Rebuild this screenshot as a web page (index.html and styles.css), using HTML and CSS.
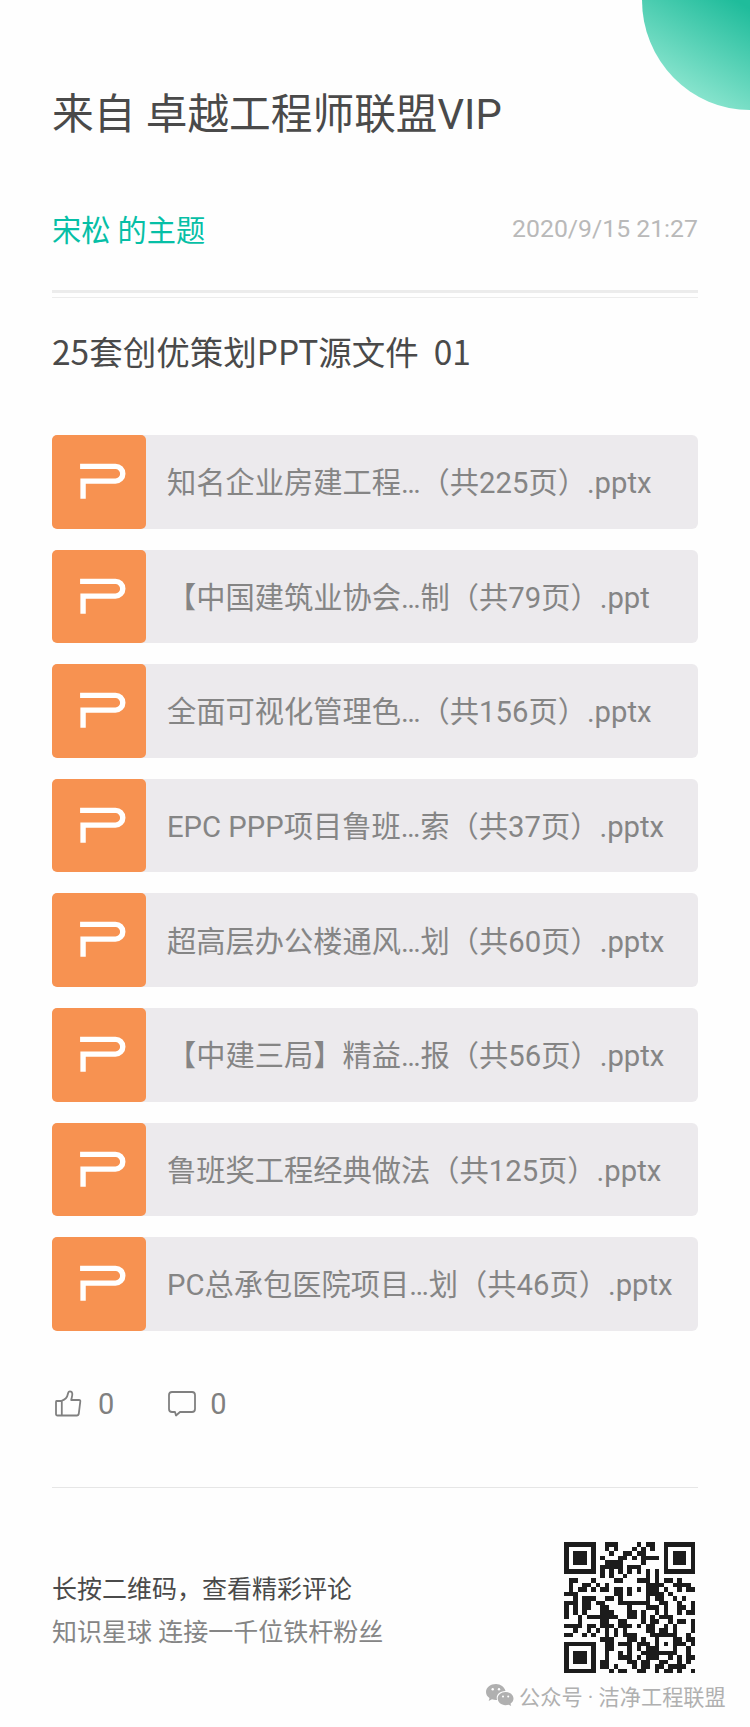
FILE: index.html
```html
<!DOCTYPE html>
<html lang="zh-CN">
<head>
    <meta charset="UTF-8">
    <meta name="viewport" content="width=device-width, initial-scale=1.0">
    <title>卓越工程师联盟VIP</title>
    <link rel="stylesheet" href="styles.css">
</head>
<body>
    <svg class="hidden">
        <symbol id="icon-ppt" viewBox="0 0 94 94">
            <path d="M28 31.500H63.500a7.300 7.300 0 0 1 0 14.800H31V64" fill="none" stroke="#fff" stroke-width="5.400" />
        </symbol>
    </svg>

    <div class="corner"></div>

    <div class="card">
        <h1>来自 卓越工程师联盟VIP</h1>

        <div class="meta">
            <span class="author">宋松 的主题</span>
            <span class="date">2020/9/15 21:27</span>
        </div>

        <h2>25套创优策划PPT源文件&nbsp; 01</h2>

        <ul class="files">
            <li><svg class="file-icon"><use href="#icon-ppt" /></svg><span>知名企业房建工程…（共225页）.pptx</span></li>
            <li><svg class="file-icon"><use href="#icon-ppt" /></svg><span>【中国建筑业协会…制（共79页）.ppt</span></li>
            <li><svg class="file-icon"><use href="#icon-ppt" /></svg><span>全面可视化管理色…（共156页）.pptx</span></li>
            <li><svg class="file-icon"><use href="#icon-ppt" /></svg><span>EPC PPP项目鲁班…索（共37页）.pptx</span></li>
            <li><svg class="file-icon"><use href="#icon-ppt" /></svg><span>超高层办公楼通风…划（共60页）.pptx</span></li>
            <li><svg class="file-icon"><use href="#icon-ppt" /></svg><span>【中建三局】精益…报（共56页）.pptx</span></li>
            <li><svg class="file-icon"><use href="#icon-ppt" /></svg><span>鲁班奖工程经典做法（共125页）.pptx</span></li>
            <li><svg class="file-icon"><use href="#icon-ppt" /></svg><span>PC总承包医院项目…划（共46页）.pptx</span></li>
        </ul>

        <div class="stats">
            <svg class="like" viewBox="0 0 28 28">
                <path d="M2.500 11H7q6-1.500 7-7.500q.5-2.500 2.500-2q2.800.6 1.300 6l-.6 2.500H25q1.500 0 1.300 1.500L24.800 23.500q-.3 2-2 2H3.500q-1.500 0-1.500-1.500V12q0-1 .5-1zM7.800 11V25.500" />
            </svg>
            <span class="count">0</span>
            <svg class="comment" viewBox="0 0 28 28">
                <path d="M4 2H24q3 0 3 3V19q0 3-3 3H12L8 25.500L7 22H4q-3 0-3-3V5q0-3 3-3z" />
            </svg>
            <span class="count">0</span>
        </div>

        <div class="footer">
            <div>
                <p class="tip">长按二维码，查看精彩评论</p>
                <p class="slogan">知识星球 连接一千位铁杆粉丝</p>
            </div>
            <svg id="qrcode" class="qrcode" viewBox="0 0 29 29"></svg>
        </div>
    </div>

    <div class="watermark">
        <svg viewBox="0 0 28 23">
            <path fill="#b0b0b0" d="M10 0C4.500 0 0 3.500 0 8c0 2.500 1.300 4.600 3.500 6L2.700 17l3.300-1.700c1.300.4 2.600.6 4 .6h1C9.500 10.500 14 6.800 19.500 6.900C18.500 2.900 14.600 0 10 0z" />
            <path fill="#b0b0b0" d="M19.500 8C15 8 11.700 11 11.700 14.600c0 3.700 3.500 6.600 7.800 6.600 1.100 0 2.100-.2 3.100-.5l2.600 1.400-.7-2.400c1.900-1.200 3-3 3-5.100C27.500 11 24 8 19.500 8z" />
            <g fill="#fff">
                <circle cx="6.700" cy="5.300" r="1.200" />
                <circle cx="13" cy="5.300" r="1.200" />
                <circle cx="17" cy="12.500" r="1" />
                <circle cx="22.200" cy="12.500" r="1" />
            </g>
        </svg>
        <span>公众号 · 洁净工程联盟</span>
    </div>

    <script>
        const rows = [
            '#######..###....#.##..#######',
            '#.....#..#.#...#.#.#..#.....#',
            '#.###.#...#..##.##....#.###.#',
            '#.###.#.#...##.#.####.#.###.#',
            '#.###.#..####....#....#.###.#',
            '#.....#.#####.###.....#.....#',
            '#######.#.#.#.#.#.#.#.#######',
            '........#.#..#....#.#........',
            '.##...#....##...###.#.##.#...',
            '.#..##.#.#........####..####.',
            '.#.##.#.##.##.#.#.###.#..#.##',
            '###........##.#...####.#.....',
            '..#.###..##.#.....#.##..#.#..',
            '###.##.##...#######..##..#..#',
            '#.#.##..##....#...###.#..##.#',
            '#.#.#...###...##.#..#.#..#.##',
            '#..#.#######..##.#.#.###.....',
            '...#....##..##...#.##..#.##.#',
            '####.##.###.###.#.##..#.#...#',
            '..#..#.#.#.#.#....##.##.#...#',
            '##..#.#..#.#.###...######..#.',
            '........###...##.#..#...##.##',
            '#######..##.###.###.#.#.###.#',
            '#.....#..##...#.#.###...#..#.',
            '#.###.#..#..#.#..########..#.',
            '#.###.#..#..###.#.###..#.#.##',
            '#.###.#.##....##.##..##..#.#.',
            '#.....#.##.#...#.##.##.####..',
            '#######...#.##..##..#.##.#..#'
        ];

        // 逐行绘制二维码
        let d = '';
        rows.forEach((row, y) => {
            for (let x = 0; x < row.length; x++) {
                if (row[x] === '#') d += `M${x} ${y}h1v1h-1z`;
            }
        });
        document.getElementById('qrcode').innerHTML = `<path d="${d}" />`;
    </script>
</body>
</html>
```
FILE: styles.css
```css
* {
    box-sizing: border-box;
    margin: 0;
    padding: 0;
}

body {
    position: relative;
    min-height: 1727px;
    background-color: #fefefe;
    font-family: Roboto, "Noto Sans CJK SC", sans-serif;
    overflow-x: hidden;
}

.hidden {
    display: none;
}

.corner {
    position: absolute;
    top: 0;
    right: 0;
    width: 108px;
    height: 110px;
    border-bottom-left-radius: 108px 110px;
    background: linear-gradient(30deg, #98ead5 15%, #1fbc9b 95%);
}

.card {
    padding: 85px 52px 0;
}

h1 {
    height: 60px;
    line-height: 60px;
    font-size: 41.700px;
    font-weight: 400;
    color: #4a4a4a;
}

.meta {
    display: flex;
    align-items: center;
    justify-content: space-between;
    height: 153px;
    padding-top: 14px;
    border-bottom: 1px solid #ececec;
    background: linear-gradient(#ececec, #ececec) 0 145px / 100% 3px no-repeat;
}

.author {
    font-size: 29.200px;
    color: #06bfa6;
}

.date {
    font-size: 24.800px;
    color: #b9b9b9;
}

h2 {
    height: 50px;
    margin-top: 28px;
    line-height: 50px;
    font-family: "Noto Sans CJK SC", sans-serif;
    font-size: 33.500px;
    font-weight: 400;
    color: #4a4a4a;
}

.files {
    display: grid;
    gap: 21px;
    margin-top: 59px;
    list-style: none;
}

.files li {
    display: flex;
    align-items: center;
    height: 93.600px;
    border-radius: 6px;
    background-color: #eceaed;
    font-size: 29.250px;
    color: #858585;
    white-space: nowrap;
}

.files span {
    padding-bottom: 3px;
}

.file-icon {
    width: 94px;
    height: 93.600px;
    margin-right: 21px;
    border-radius: 5px;
    background-color: #f79251;
}

.stats {
    display: flex;
    align-items: center;
    height: 157px;
    padding: 0 0 10px 2px;
    border-bottom: 1px solid #e6e6e6;
}

.stats svg {
    width: 28px;
    height: 28px;
    fill: none;
    stroke: #808080;
    stroke-width: 1.800;
    stroke-linejoin: round;
}

.count {
    margin-left: 16px;
    font-size: 29px;
    color: #808080;
}

.stats .comment {
    margin-left: 54px;
}

.comment + .count {
    margin-left: 14px;
}

.footer {
    display: flex;
    justify-content: space-between;
    padding-top: 54px;
}

.footer p {
    height: 43px;
    line-height: 43px;
    font-size: 25px;
}

.tip {
    margin-top: 26px;
    color: #4a4a4a;
}

.slogan {
    color: #858585;
}

.qrcode {
    width: 131.500px;
    height: 131.500px;
    margin-right: 3px;
    fill: #1c1c1c;
    shape-rendering: crispEdges;
}

.watermark {
    display: flex;
    align-items: center;
    height: 30px;
    margin-top: 7px;
    padding-left: 486px;
    font-size: 21.200px;
    color: #b0b0b0;
    white-space: nowrap;
}

.watermark svg {
    width: 28px;
    height: 23px;
    margin-right: 5px;
}
```
